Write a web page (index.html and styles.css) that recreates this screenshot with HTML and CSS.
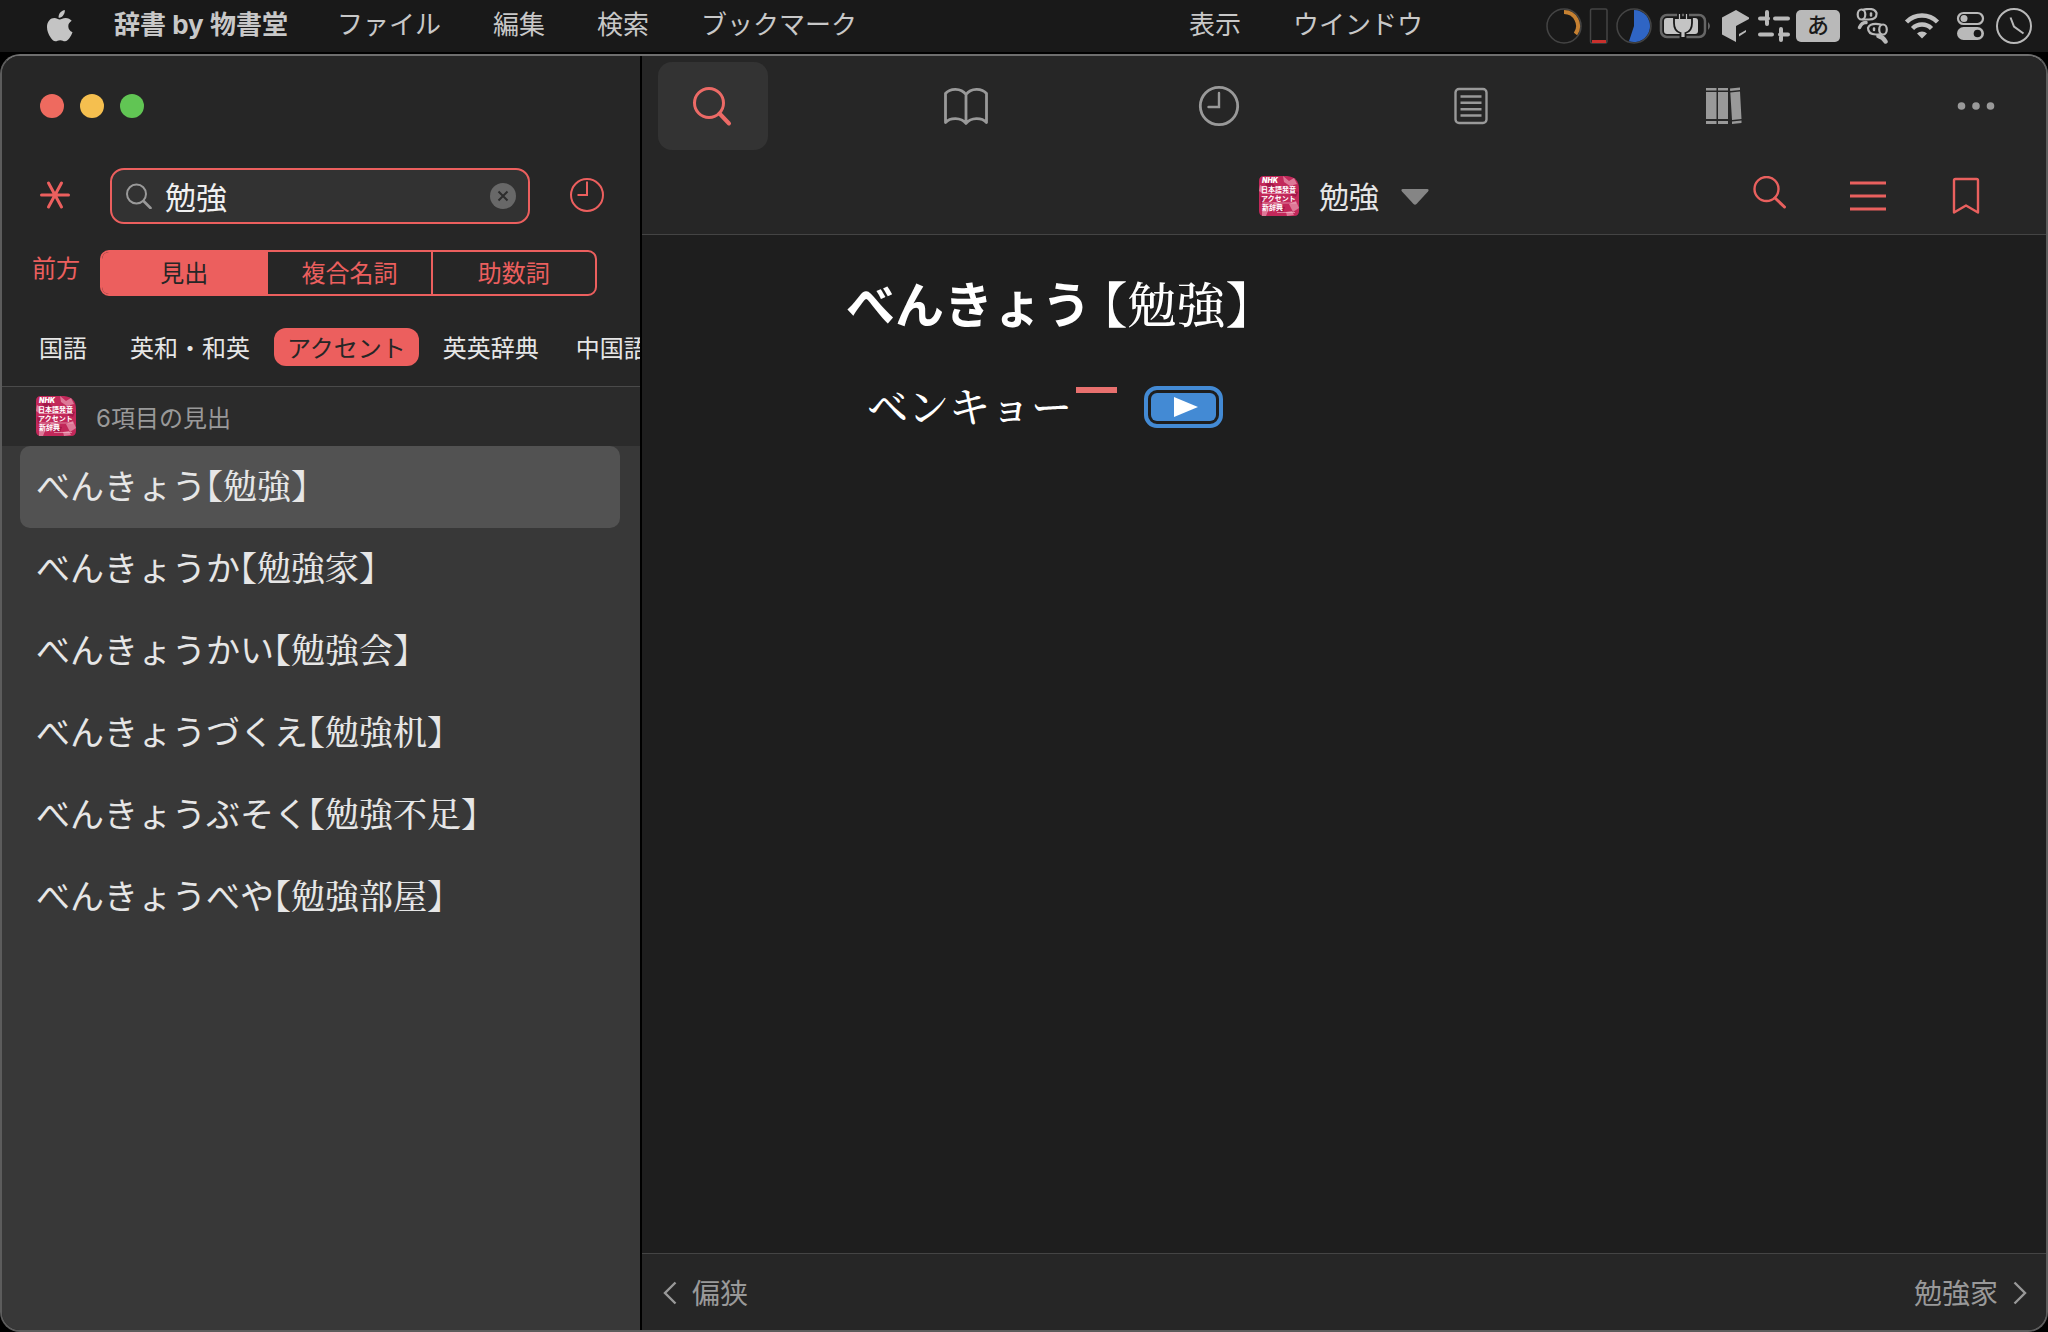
FILE: index.html
```html
<!DOCTYPE html>
<html lang="ja">
<head>
<meta charset="utf-8">
<title>辞書 by 物書堂</title>
<link rel="stylesheet" href="styles.css">
</head>
<body>
<svg class="defs" aria-hidden="true">
  <defs>
    <symbol id="nhk" viewBox="0 0 40 40">
      <path d="M5 0H28Q40 1 40 13V35Q40 40 35 40H5Q0 40 0 35V5Q0 0 5 0Z" fill="#c2285a"/>
      <path d="M24 0l6 5 5-3 3 6-7 2-6-4zM1 9l5 3-3 5-3-2zM30 28l7-3 3 7-6 4zM3 33l6 2-2 5H3zM18 10l5 2-3 3zM14 26l6 1-3 4zM27 36l6-1 2 4-7 1z" fill="#dd7897"/>
      <path d="M6 8l6-2 4 4-6 3zM33 14l6 2-2 5-5-2zM20 30l6 1-2 6-6-2zM1 21l5 2-4 5z" fill="#a3184a"/>
      <text x="3" y="7" class="nhk-latin">NHK</text>
      <text x="2" y="16" class="nhk-text">日本語発音</text>
      <text x="2" y="25" class="nhk-text">アクセント</text>
      <text x="3" y="34" class="nhk-text">新辞典</text>
      <path d="M3 17.500H37M3 27H37M18 36.500H36" stroke="#f3c3d0" stroke-width=".6"/>
    </symbol>
  </defs>
</svg>

<header class="menubar">
  <button class="apple" aria-label="アップルメニュー">
    <svg width="28" height="34" viewBox="0 0 28 34"><path fill="#c4c4c4" d="M18.800 1c.3 2.300-.7 4.300-1.900 5.700-1.200 1.400-2.800 2.200-4.300 2.100-.3-2.200.7-4.200 1.900-5.500C15.700 2 17.400 1.100 18.800 1zM25.700 11.800c-2.300 1.400-3.400 3.200-3.400 5.500 0 2.700 1.500 4.900 4.200 6-.7 2.100-1.700 4-3 5.800-1.400 2-2.700 3.200-4.500 3.200s-2.600-1.100-4.800-1.100-3.100 1.100-4.800 1.100c-1.900 0-3.300-1.600-4.800-3.800C2.300 25.200 1 21.600 1 18.100c0-5.600 3.500-9 7.400-9 2.100 0 3.900 1.400 5.300 1.400 1.300 0 3.400-1.500 5.900-1.500 2.500 0 4.700 1.100 6.100 2.800z"/></svg>
  </button>
  <button class="menu app-name">辞書 by 物書堂</button>
  <nav class="menus">
    <button class="menu">ファイル</button>
    <button class="menu">編集</button>
    <button class="menu">検索</button>
    <button class="menu">ブックマーク</button>
  </nav>
  <nav class="menus menus-end">
    <button class="menu">表示</button>
    <button class="menu">ウインドウ</button>
  </nav>
  <div class="status">
    <svg width="36" height="36" viewBox="0 0 36 36" fill="none"><circle cx="18" cy="18" r="17" stroke="#444" stroke-width="1.500"/><path d="M18 4a14 14 0 0 1 11.500 22" stroke="#c68132" stroke-width="4"/></svg>
    <svg width="22" height="36" viewBox="0 0 22 36" fill="none"><rect x="2.500" y="1" width="16.500" height="34" rx="1.500" stroke="#444" stroke-width="1.500"/><path d="M4 33.500H18" stroke="#c9302c" stroke-width="3"/></svg>
    <svg width="36" height="36" viewBox="0 0 36 36" fill="none"><circle cx="18" cy="18" r="17" stroke="#444" stroke-width="1.500"/><path d="M18 18V2a16 16 0 1 1-5 31.200z" fill="#2f65c4"/></svg>
    <svg width="56" height="36" viewBox="0 0 56 36" fill="none"><rect x="3" y="7" width="44" height="22" rx="6" stroke="#666" stroke-width="2.500"/><rect x="6" y="10" width="34" height="16" rx="3" fill="#c4c4c4"/><path d="M50 14q4 4 0 8z" fill="#666"/><path d="M20 5v5h-4v5c0 6 3 9 6.500 10v5h5v-5c3.500-1 6.500-4 6.500-10v-5h-4V5h-3v5h-4V5z" fill="#c4c4c4" stroke="#191919" stroke-width="1.800"/></svg>
    <svg width="30" height="36" viewBox="0 0 30 36" fill="#b9b9b9"><path d="M16 2L29 9.500V11L16 18V34L2 26.500V9.500z"/><path d="M19 26l7-4v2l-7 4.500z"/></svg>
    <svg width="34" height="36" viewBox="0 0 34 36" fill="none" stroke="#b9b9b9" stroke-width="4" stroke-linecap="round"><path d="M4 10.500H12M19 10.500H32M11 4V16M4 26.500H16M24 26.500H32M25 21V32"/></svg>
    <span class="ime">あ</span>
    <svg width="50" height="36" viewBox="0 0 50 36" fill="none" stroke="#b9b9b9" stroke-width="2.200" stroke-linecap="round"><ellipse cx="15.500" cy="6.500" rx="3.800" ry="5"/><path d="M17 1.800Q28 -1 30.500 5Q31 11.500 23 11.500H17"/><path d="M20 14.500Q16 14 13.500 19.500" stroke-width="3.500"/><path d="M25 5.500V7.500" stroke-width="2.500"/><ellipse cx="37" cy="21.500" rx="3.800" ry="5"/><path d="M35 16.500Q24 14.500 22 20Q22 26.500 30 26.500H35"/><path d="M32.500 28Q37 29 39.500 33.500" stroke-width="4.500"/><path d="M28 20.500V22" stroke-width="2.500"/></svg>
    <svg width="40" height="36" viewBox="0 0 40 36" fill="none" stroke="#c0c0c0" stroke-width="4.500"><path d="M4.500 14a22 22 0 0 1 31 0M10.500 20.500a13.500 13.500 0 0 1 19 0"/><path d="M20 30.500l-5-5a7 7 0 0 1 10 0z" fill="#c0c0c0" stroke="none"/></svg>
    <svg width="42" height="36" viewBox="0 0 42 36" fill="none"><rect x="10" y="5" width="25" height="11" rx="5.500" stroke="#b9b9b9" stroke-width="2.200"/><circle cx="16" cy="10.500" r="3.500" fill="#b9b9b9"/><rect x="9" y="19" width="27" height="13" rx="6.500" fill="#b9b9b9"/><circle cx="29.500" cy="25.500" r="3.800" fill="#191919"/></svg>
    <svg width="36" height="36" viewBox="0 0 36 36" fill="none" stroke="#b9b9b9" stroke-width="2"><circle cx="18" cy="18" r="17"/><path d="M14.500 9.500L18 18.500 27.500 25.500"/></svg>
  </div>
</header>

<div class="window">
  <aside class="sidebar">
    <div class="controls">
      <div class="lights">
        <button class="light close" aria-label="閉じる"></button>
        <button class="light minimize" aria-label="しまう"></button>
        <button class="light zoom" aria-label="拡大"></button>
      </div>
      <div class="search-row">
        <button class="icon-button" aria-label="ワイルドカード"><svg width="30" height="32" viewBox="0 0 30 32" stroke="#ec5f5e" stroke-width="3" stroke-linecap="round"><path d="M1.500 15H28.500M8.500 3L21.500 27M21.500 3L8.500 27"/></svg></button>
        <div class="search-box">
          <svg width="26" height="26" viewBox="0 0 26 26" fill="none" stroke="#999" stroke-width="2"><circle cx="10.500" cy="11" r="9.500"/><path d="M17.500 18L24.500 25" stroke-width="2.600" stroke-linecap="round"/></svg>
          <input class="search-input" type="text" value="勉強" aria-label="検索語">
          <button class="clear" aria-label="消去"><svg width="26" height="26" viewBox="0 0 26 26"><circle cx="13" cy="13" r="13" fill="#686868"/><path d="M8.500 8.500L17.500 17.500M17.500 8.500L8.500 17.500" stroke="#2c2c2c" stroke-width="2"/></svg></button>
        </div>
        <button class="icon-button" aria-label="履歴"><svg width="36" height="38" viewBox="0 0 36 38" fill="none" stroke="#ec5f5e" stroke-width="2"><circle cx="18" cy="18" r="16"/><path d="M18 4.500V18H8.500"/></svg></button>
      </div>
      <div class="scope-row">
        <button class="match">前方</button>
        <div class="segments">
          <button class="segment selected">見出</button>
          <button class="segment">複合名詞</button>
          <button class="segment">助数詞</button>
        </div>
      </div>
      <nav class="groups">
        <button class="group">国語</button>
        <button class="group">英和・和英</button>
        <button class="group selected">アクセント</button>
        <button class="group">英英辞典</button>
        <button class="group">中国語</button>
      </nav>
    </div>
    <div class="result-head">
      <svg width="40" height="40"><use href="#nhk"/></svg>
      <span>6項目の見出</span>
    </div>
    <ul class="results">
      <li><a class="result selected" href="#">べんきょう<span class="kanji">【勉強】</span></a></li>
      <li><a class="result" href="#">べんきょうか<span class="kanji">【勉強家】</span></a></li>
      <li><a class="result" href="#">べんきょうかい<span class="kanji">【勉強会】</span></a></li>
      <li><a class="result" href="#">べんきょうづくえ<span class="kanji">【勉強机】</span></a></li>
      <li><a class="result" href="#">べんきょうぶそく<span class="kanji">【勉強不足】</span></a></li>
      <li><a class="result" href="#">べんきょうべや<span class="kanji">【勉強部屋】</span></a></li>
    </ul>
  </aside>

  <main class="main">
    <div class="toolbar">
      <nav class="tabs">
        <button class="tab selected" aria-label="検索"><svg width="44" height="44" viewBox="0 0 44 44" fill="none" stroke="#ec6a66" stroke-width="3"><circle cx="18" cy="19" r="14.500"/><path d="M28.500 29.500L38 39.500" stroke-width="4" stroke-linecap="round"/></svg></button>
        <button class="tab" aria-label="辞書"><svg width="44" height="44" viewBox="0 0 44 44" fill="none" stroke="#999" stroke-width="2.800" stroke-linejoin="round"><path d="M22 10.500C17 3.500 6 4 1.500 9.500V38.500C6 33.500 17 33 22 39.500C27 33 38 33.500 42.500 38.500V9.500C38 4 27 3.500 22 10.500ZM22 10.500V39.500"/></svg></button>
        <button class="tab" aria-label="履歴"><svg width="44" height="44" viewBox="0 0 44 44" fill="none" stroke="#999" stroke-width="2.800"><circle cx="23" cy="22" r="18.700"/><path d="M23 9V23H12.500" stroke-width="2.400" stroke-linecap="round"/></svg></button>
        <button class="tab" aria-label="目次"><svg width="44" height="44" viewBox="0 0 44 44" fill="none" stroke="#999" stroke-width="2.400"><rect x="6.500" y="5" width="31" height="34" rx="3.500"/><path d="M11.500 12.500H32.500M11.500 18.700H32.500M11.500 25.200H32.500M11.500 31.500H32.500"/></svg></button>
        <button class="tab" aria-label="本棚"><svg width="44" height="44" viewBox="-1 0 44 44" fill="#999"><path d="M4 4H14.500V6.500H4zM4 8H14.500V35H4zM4 37H14.500V40H4zM16 4H26V6.500H16zM16 8H26V35H16zM16 37H26V40H16zM28 4.500L38 3.500V6L28.200 7zM28.300 8.500L38 7.500L39.500 35L30 36zM30 37.500L39.500 36.500V39L30 40z"/></svg></button>
        <button class="tab" aria-label="その他"><svg width="44" height="44" viewBox="0 0 44 44" fill="#999"><circle cx="7.500" cy="22" r="3.800"/><circle cx="22" cy="22" r="3.800"/><circle cx="36.500" cy="22" r="3.800"/></svg></button>
      </nav>
      <div class="title-row">
        <button class="title">
          <svg width="40" height="40"><use href="#nhk"/></svg>
          <span class="title-text">勉強</span>
          <svg width="30" height="18" viewBox="-2 -2 30 18"><path d="M1.500 0H26.500Q28.500 .5 27 2.500L15.500 15Q14 16.500 12.500 15L1 2.500Q-.5 .5 1.500 0Z" fill="#858585"/></svg>
        </button>
        <div class="actions">
          <button class="icon-button" aria-label="ページ内検索"><svg width="40" height="40" viewBox="0 0 40 40" fill="none" stroke="#e9605e" stroke-width="2.400"><circle cx="16.500" cy="13" r="12"/><path d="M25 22L34.500 31" stroke-width="3" stroke-linecap="round"/></svg></button>
          <button class="icon-button" aria-label="項目一覧"><svg width="40" height="40" viewBox="0 0 40 40" stroke="#e9605e" stroke-width="3"><path d="M2 7H38M2 20H38M2 33H38"/></svg></button>
          <button class="icon-button" aria-label="しおり"><svg width="40" height="40" viewBox="0 0 40 40" fill="none" stroke="#e9605e" stroke-width="2.400" stroke-linejoin="round"><path d="M9.500 3H30.500Q32 3 32 4.500V36.500L20 29.500 8 36.500V4.500Q8 3 9.500 3Z"/></svg></button>
        </div>
      </div>
    </div>
    <article class="entry">
      <h1 class="headword">べんきょう<span class="headword-kanji">【勉強】</span></h1>
      <div class="accent">
        <span class="reading">ベンキョー</span>
        <span class="accent-mark"></span>
        <button class="play" aria-label="再生"><svg width="24" height="20" viewBox="0 0 24 20"><path d="M0 0L24 10L0 20z" fill="#fff"/></svg></button>
      </div>
    </article>
    <footer class="pager">
      <a class="page-link" href="#"><svg width="14" height="26" viewBox="0 0 14 26" fill="none" stroke="#999" stroke-width="2.400"><path d="M12.500 3.500L2 14L12.500 24.500"/></svg>偏狭</a>
      <a class="page-link" href="#">勉強家<svg width="14" height="26" viewBox="0 0 14 26" fill="none" stroke="#999" stroke-width="2.400"><path d="M1.500 3.500L12 14L1.500 24.500"/></svg></a>
    </footer>
  </main>
</div>
</body>
</html>
```

FILE: styles.css
```css
* {
  box-sizing: border-box;
}

body {
  margin: 0;
  min-height: 100vh;
  display: flex;
  flex-direction: column;
  background: #000;
  color: #e6e6e6;
  font-family: Inter, "Noto Sans CJK JP", sans-serif;
  font-size: 24px;
}

button {
  margin: 0;
  padding: 0;
  border: 0;
  background: none;
  color: inherit;
  font: inherit;
  white-space: nowrap;
}

a {
  color: inherit;
  text-decoration: none;
}

svg {
  display: block;
  flex: none;
}

.defs {
  position: absolute;
  width: 0;
  height: 0;
}

.nhk-latin {
  fill: #fff;
  font: italic 900 7px Inter, sans-serif;
}

.nhk-text {
  fill: #fff;
  font: 700 7px "Noto Sans CJK JP", sans-serif;
}

/* Menu bar */

.menubar {
  display: flex;
  align-items: center;
  height: 52px;
  margin-bottom: 2px;
  padding: 0 16px 0 46px;
  background: #191919;
  color: #c8c8c8;
}

.apple {
  margin-right: 40px;
}

.menus {
  display: flex;
  gap: 52px;
}

.menus-end {
  margin-left: 332px;
}

.menu {
  padding-bottom: 2px;
  font-size: 26px;
  line-height: 48px;
}

.app-name {
  margin-right: 49px;
  font-weight: 700;
}

.status {
  display: flex;
  align-items: center;
  gap: 6px;
  margin-left: auto;
}

.ime {
  width: 44px;
  height: 32px;
  border-radius: 5px;
  background: #b9b9b9;
  color: #191919;
  font-size: 22px;
  font-weight: 500;
  line-height: 31px;
  text-align: center;
}

/* Window */

.window {
  flex: 1;
  display: grid;
  grid-template-columns: 640px 1fr;
  border: 2px solid #5c5c5c;
  border-top-color: #6e6e6e;
  border-radius: 20px;
  overflow: hidden;
  background: #1e1e1e;
}

.icon-button {
  display: flex;
  align-items: center;
  justify-content: center;
}

/* Sidebar */

.sidebar {
  min-width: 0;
  border-right: 2px solid #000;
  background: #383838;
}

.controls {
  padding: 38px 0 20px;
  border-bottom: 1px solid #4a4a4a;
  background: #262626;
  overflow: hidden;
}

.lights {
  display: flex;
  gap: 16px;
  padding-left: 38px;
}

.light {
  width: 24px;
  height: 24px;
  border-radius: 50%;
}

.close {
  background: #ee6a5f;
}

.minimize {
  background: #f5bf4f;
}

.zoom {
  background: #61c554;
}

.search-row {
  display: flex;
  align-items: center;
  margin-top: 50px;
  padding: 0 35px 0 38px;
}

.search-box {
  flex: 1;
  min-width: 0;
  display: flex;
  align-items: center;
  height: 56px;
  margin: 0 39px 0 40px;
  padding: 0 12px 0 14px;
  border: 2px solid #ec5f5e;
  border-radius: 14px;
  background: #323232;
}

.search-input {
  flex: 1;
  min-width: 0;
  height: 48px;
  margin-left: 13px;
  padding: 0 0 2px;
  border: 0;
  outline: 0;
  background: none;
  color: #f0f0f0;
  font: inherit;
  font-size: 31px;
}

.scope-row {
  display: flex;
  align-items: flex-start;
  gap: 20px;
  margin-top: 26px;
  padding: 0 43px 0 30px;
  color: #ec5f5e;
}

.match {
  line-height: 38px;
}

.segments {
  flex: 1;
  display: grid;
  grid-template-columns: repeat(3, 1fr);
  height: 46px;
  border: 2px solid #ec5f5e;
  border-radius: 9px;
  overflow: hidden;
}

.segment {
  padding-top: 2px;
  border-left: 2px solid #ec5f5e;
  line-height: 40px;
}

.segment.selected {
  border-left: 0;
  background: #ec5f5e;
  color: #262626;
}

.groups {
  display: flex;
  gap: 11px;
  margin-top: 32px;
  padding-left: 18px;
}

.group {
  flex: none;
  min-width: 86px;
  height: 38px;
  padding: 3px 13px 0;
  border-radius: 12px;
  line-height: 35px;
}

.group.selected {
  background: #ec5f5e;
  color: #262626;
}

.result-head {
  display: flex;
  align-items: center;
  gap: 20px;
  height: 59px;
  padding: 0 0 1px 34px;
  background: #2b2b2b;
  color: #999;
}

.results {
  margin: 0;
  padding: 0 20px 0 18px;
  list-style: none;
}

.result {
  display: block;
  height: 82px;
  padding-left: 16px;
  border-radius: 10px;
  font-size: 34px;
  line-height: 78px;
}

.result.selected {
  background: #525252;
}

.kanji,
.headword-kanji {
  font-family: "Noto Serif CJK JP", "Noto Sans CJK JP", serif;
  font-feature-settings: "halt";
}

.kanji {
  font-weight: 500;
}

/* Main */

.main {
  display: flex;
  flex-direction: column;
  min-width: 0;
}

.toolbar {
  padding-top: 6px;
  border-bottom: 1px solid #444;
  background: #262626;
}

.tabs {
  display: flex;
  justify-content: space-between;
  padding: 0 15px 0 16px;
}

.tab {
  display: flex;
  align-items: center;
  justify-content: center;
  width: 110px;
  height: 88px;
  border-radius: 14px;
}

.tab.selected {
  background: #333;
}

.title-row {
  display: grid;
  grid-template-columns: 1fr auto 1fr;
  align-items: center;
  height: 84px;
  padding-top: 8px;
}

.title {
  grid-column: 2;
  display: flex;
  align-items: center;
  gap: 20px;
  font-size: 30px;
}

.title-text {
  padding-bottom: 2px;
}

.actions {
  display: flex;
  justify-content: flex-end;
  gap: 58px;
  padding-right: 60px;
}

.entry {
  flex: 1;
  padding: 30px 204px;
  color: #fff;
}

.headword {
  margin: 0;
  font-size: 49px;
  line-height: 74px;
}

.headword-kanji {
  margin-left: 12px;
  font-weight: 500;
}

.accent {
  display: flex;
  align-items: center;
  margin-top: 34px;
  padding-left: 21px;
  font-family: "Noto Serif CJK JP", "Noto Sans CJK JP", serif;
  font-size: 41px;
  font-weight: 500;
}

.reading {
  padding-bottom: 4px;
  line-height: 56px;
}

.accent-mark {
  align-self: flex-start;
  width: 41px;
  height: 6px;
  margin: 10px 34px 0 4px;
  background: #e8706e;
}

.play {
  display: flex;
  align-items: center;
  justify-content: center;
  width: 65px;
  height: 28px;
  padding-left: 4px;
  border-radius: 6px;
  outline: 4px solid #438ad4;
  outline-offset: 3px;
  background: #438ad4;
}

.pager {
  display: flex;
  align-items: center;
  justify-content: space-between;
  height: 77px;
  padding: 0 19px 0 21px;
  border-top: 1px solid #444;
  background: #262626;
  color: #999;
  font-size: 28px;
}

.page-link {
  display: flex;
  align-items: center;
  gap: 15px;
}
```
